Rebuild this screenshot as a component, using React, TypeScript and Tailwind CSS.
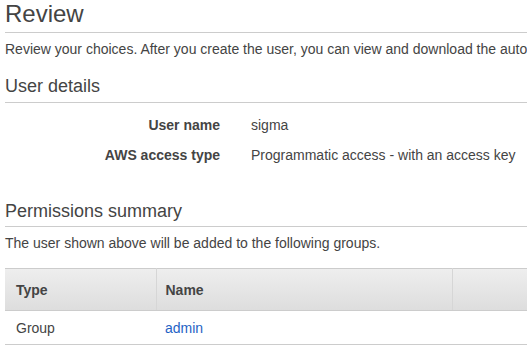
import React from 'react'

const details = [
  { label: 'User name', value: 'sigma' },
  { label: 'AWS access type', value: 'Programmatic access - with an access key' },
]

const App = () => {
  return (
    <div className="w-[527px] h-[349px] overflow-hidden bg-white px-[5px] text-[#444] font-['Liberation_Sans',Arial,sans-serif]">
      {/* Review */}
      <h1 className="text-[24px] leading-[28px] pb-[4px] border-b border-[#ccc] -mr-[5px]">Review</h1>
      <p className="mt-[6px] text-[14px] leading-[20px] whitespace-nowrap">
        Review your choices. After you create the user, you can view and download the autogenerated password and access key.
      </p>

      {/* User details */}
      <h2 className="mt-[15px] text-[18px] leading-[24px] pb-[4px] border-b border-[#ccc] -mr-[5px]">User details</h2>
      <div className="mt-[12px] flex flex-col gap-[10px] text-[14px] leading-[20px]">
        {details.map((d) => (
          <div key={d.label} className="flex">
            <div className="w-[215px] text-right font-bold">{d.label}</div>
            <div className="pl-[31px] whitespace-nowrap">{d.value}</div>
          </div>
        ))}
      </div>

      {/* Permissions summary */}
      <h2 className="mt-[34px] text-[18px] leading-[24px] pb-[3px] border-b border-[#ccc] -mr-[5px]">Permissions summary</h2>
      <p className="mt-[6px] text-[14px] leading-[20px] whitespace-nowrap">
        The user shown above will be added to the following groups.
      </p>

      <table className="mt-[15px] w-[522px] border-collapse text-[14px] leading-[20px] table-fixed">
        <thead>
          <tr className="bg-gradient-to-b from-[#eeeeee] to-[#dddddd] h-[42px]">
            <th className="w-[151px] text-left font-bold pl-[11px] border-t border-b border-[#ccc] border-r border-r-[#d6d6d6]">Type</th>
            <th className="w-[296px] text-left font-bold pl-[9px] border-t border-b border-[#ccc] border-r border-r-[#d6d6d6]">Name</th>
            <th className="border-t border-b border-[#ccc]"></th>
          </tr>
        </thead>
        <tbody>
          <tr className="h-[34px] border-b border-[#ccc]">
            <td className="pl-[11px]">Group</td>
            <td className="pl-[9px] text-[#1f63c5]">admin</td>
            <td></td>
          </tr>
        </tbody>
      </table>
    </div>
  )
}

export default App
